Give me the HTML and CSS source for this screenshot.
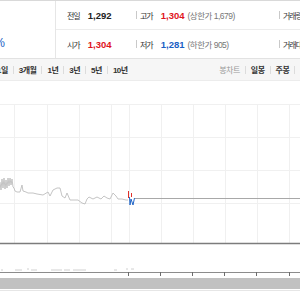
FILE: index.html
```html
<!DOCTYPE html>
<html lang="ko">
<head>
    <meta charset="UTF-8">
    <title>시세 차트</title>
    <link rel="stylesheet" href="styles.css">
</head>
<body>

    <div class="quote">
        <div class="quote-left">
            <span class="rate">0.93%</span>
        </div>
        <div class="quote-rows">
            <div class="row">
                <div class="cell first"><span class="lbl">전일</span><b class="num">1,292</b></div>
                <div class="cell mid"><span class="lbl">고가</span><b class="num up">1,304</b><span class="sub">(상한가 1,679)</span></div>
                <div class="cell"><span class="lbl">거래량</span></div>
            </div>
            <div class="row">
                <div class="cell first"><span class="lbl">시가</span><b class="num up">1,304</b></div>
                <div class="cell mid"><span class="lbl">저가</span><b class="num down">1,281</b><span class="sub">(하한가 905)</span></div>
                <div class="cell"><span class="lbl">거래대금</span></div>
            </div>
        </div>
    </div>

    <div class="tabs">
        <ul class="periods">
            <li>1일</li>
            <li>3개월</li>
            <li>1년</li>
            <li>3년</li>
            <li>5년</li>
            <li>10년</li>
        </ul>
        <ul class="types">
            <li class="dim">봉차트</li>
            <li>일봉</li>
            <li>주봉</li>
            <li>월봉</li>
        </ul>
    </div>

    <div class="chart">
        <svg width="300" height="220" viewBox="0 0 300 220">
            <!-- grid -->
            <line x1="0" y1="0.5" x2="300" y2="0.5" stroke="#ececec"/>
            <g stroke="#f0f0f0">
                <line x1="0" y1="24.5" x2="300" y2="24.5"/>
                <line x1="0" y1="57.5" x2="300" y2="57.5"/>
                <line x1="0" y1="90.5" x2="300" y2="90.5"/>
                <line x1="0" y1="123.5" x2="300" y2="123.5"/>
                <line x1="14.5" y1="24" x2="14.5" y2="163"/>
                <line x1="47.5" y1="24" x2="47.5" y2="163"/>
                <line x1="79.5" y1="24" x2="79.5" y2="163"/>
                <line x1="111.5" y1="24" x2="111.5" y2="163"/>
                <line x1="129.5" y1="24" x2="129.5" y2="163"/>
                <line x1="161.5" y1="24" x2="161.5" y2="163"/>
                <line x1="193.5" y1="24" x2="193.5" y2="163"/>
                <line x1="225.5" y1="24" x2="225.5" y2="163"/>
                <line x1="257.5" y1="24" x2="257.5" y2="163"/>
                <line x1="289.5" y1="24" x2="289.5" y2="163"/>
            </g>

            <!-- price line -->
            <polyline fill="none" stroke="#bdbdbd" stroke-width="0.9"
                points="0,102 1,110 2,99 3,108 4,98 5,109 6,100 7,108 8,98 9,106 10,98 11,105 12,99 13,107 14,108 15,111 17,112 20,112 22,105 23,111 26,112 28,113 33,113 37,114 43,115 48,112 50,116 53,110 57,108 60,108 62,116 65,118 67,113 70,120 73,120 78,120 82,123 85,124 87,119 89,117 93,119 97,117 101,119 104,116 107,118 110,119 113,113 116,116 118,119 122,119 126,120 128,120"/>
            <line x1="128.5" y1="111" x2="128.5" y2="118" stroke="#e0302a"/>
            <line x1="131.5" y1="113" x2="131.5" y2="117" stroke="#e0302a"/>
            <polyline fill="none" stroke="#2367c8" stroke-width="1"
                points="129.5,117 130,125 131,119 133,125 134.5,118"/>
            <line x1="135" y1="118.5" x2="300" y2="118.5" stroke="#a8a8a8"/>

            <!-- chart bottom -->
            <line x1="0" y1="163.5" x2="300" y2="163.5" stroke="#7c7c7c" stroke-width="1.5"/>

            <!-- volume -->
            <g stroke="#d0d0d0">
                <line x1="1" y1="190" x2="3" y2="190"/>
                <line x1="15" y1="190" x2="22" y2="190"/>
                <line x1="27" y1="189" x2="29" y2="189"/>
                <line x1="31" y1="190" x2="37" y2="190"/>
                <line x1="51" y1="190" x2="62" y2="190"/>
                <line x1="64" y1="190" x2="70" y2="190"/>
                <line x1="73" y1="190" x2="86" y2="190"/>
                <line x1="114" y1="190" x2="117" y2="190"/>
                <line x1="126" y1="189" x2="128" y2="189"/>
                <line x1="131" y1="189" x2="134" y2="189"/>
            </g>
            <line x1="0" y1="192.5" x2="300" y2="192.5" stroke="#8c8c8c"/>
            <g stroke="#6c6c6c">
                <line x1="128.5" y1="192" x2="128.5" y2="196"/>
                <line x1="160.5" y1="192" x2="160.5" y2="196"/>
                <line x1="192.5" y1="192" x2="192.5" y2="196"/>
                <line x1="224.5" y1="192" x2="224.5" y2="196"/>
                <line x1="256.5" y1="192" x2="256.5" y2="196"/>
                <line x1="289.5" y1="192" x2="289.5" y2="196"/>
            </g>

            <!-- scroll bar -->
            <rect x="0" y="198" width="300" height="11" fill="#c1c1c1"/>
            <line x1="0" y1="210.5" x2="300" y2="210.5" stroke="#e6e6e6"/>
        </svg>
    </div>

</body>
</html>
```

FILE: styles.css
```css
/* General */
body, html {
    margin: 0;
    padding: 0;
    background-color: #fff;
    color: #333;
    font-family: "Liberation Sans", "Noto Sans CJK KR", sans-serif;
    overflow: hidden;
}

ul {
    list-style: none;
    margin: 0;
    padding: 0;
}

/* Quote summary */
.quote {
    display: grid;
    grid-template-columns: 56px 1fr;
    border-top: 1px solid #d9d9d9;
    height: 57px;
}

.quote-left {
    border-right: 1px solid #e6e6e6;
    display: flex;
    align-items: flex-end;
    padding-bottom: 8px;
    overflow: hidden;
}

.rate {
    margin-left: -29px;
    font-size: 12px;
    color: #1b5fc4;
}

.row {
    display: flex;
    align-items: center;
    height: 28px;
}

.row:first-child {
    border-bottom: 1px solid #ececec;
}

.cell {
    display: flex;
    align-items: center;
    white-space: nowrap;
}

.cell.first {
    width: 69px;
    padding-left: 11px;
}

.cell.mid {
    width: 143px;
}

.cell + .cell::before {
    content: "";
    display: inline-block;
    width: 1px;
    height: 8px;
    background-color: #c9c9c9;
    margin-right: 3px;
}

.lbl {
    font-size: 8px;
    letter-spacing: -1px;
    color: #333;
    margin-right: 8px;
}

.num {
    font-size: 9.5px;
    color: #222;
    margin-right: 3px;
}

.num.up {
    color: #e0141d;
}

.num.down {
    color: #1b5fc4;
}

.sub {
    font-size: 8.5px;
    letter-spacing: -0.5px;
    color: #777;
}

/* Tabs */
.tabs {
    display: flex;
    align-items: center;
    width: 319px;
    height: 21px;
    background-color: #f6f6f6;
    border-top: 1px solid #e2e2e2;
    font-size: 8px;
    font-weight: bold;
    letter-spacing: -0.5px;
}

.tabs ul {
    display: flex;
    align-items: center;
}

.periods {
    margin-left: -8px;
}

.tabs li {
    display: flex;
    align-items: center;
    padding: 0 5px;
    white-space: nowrap;
}

.tabs li + li::before {
    content: "";
    display: inline-block;
    width: 1px;
    height: 8px;
    background-color: #dcdcdc;
    margin-right: 5px;
    margin-left: -5px;
}

.types {
    margin-left: auto;
}

.types li.dim {
    color: #999;
    font-weight: normal;
}

/* Chart */
.chart {
    height: 220px;
}

.chart svg {
    display: block;
}
```
